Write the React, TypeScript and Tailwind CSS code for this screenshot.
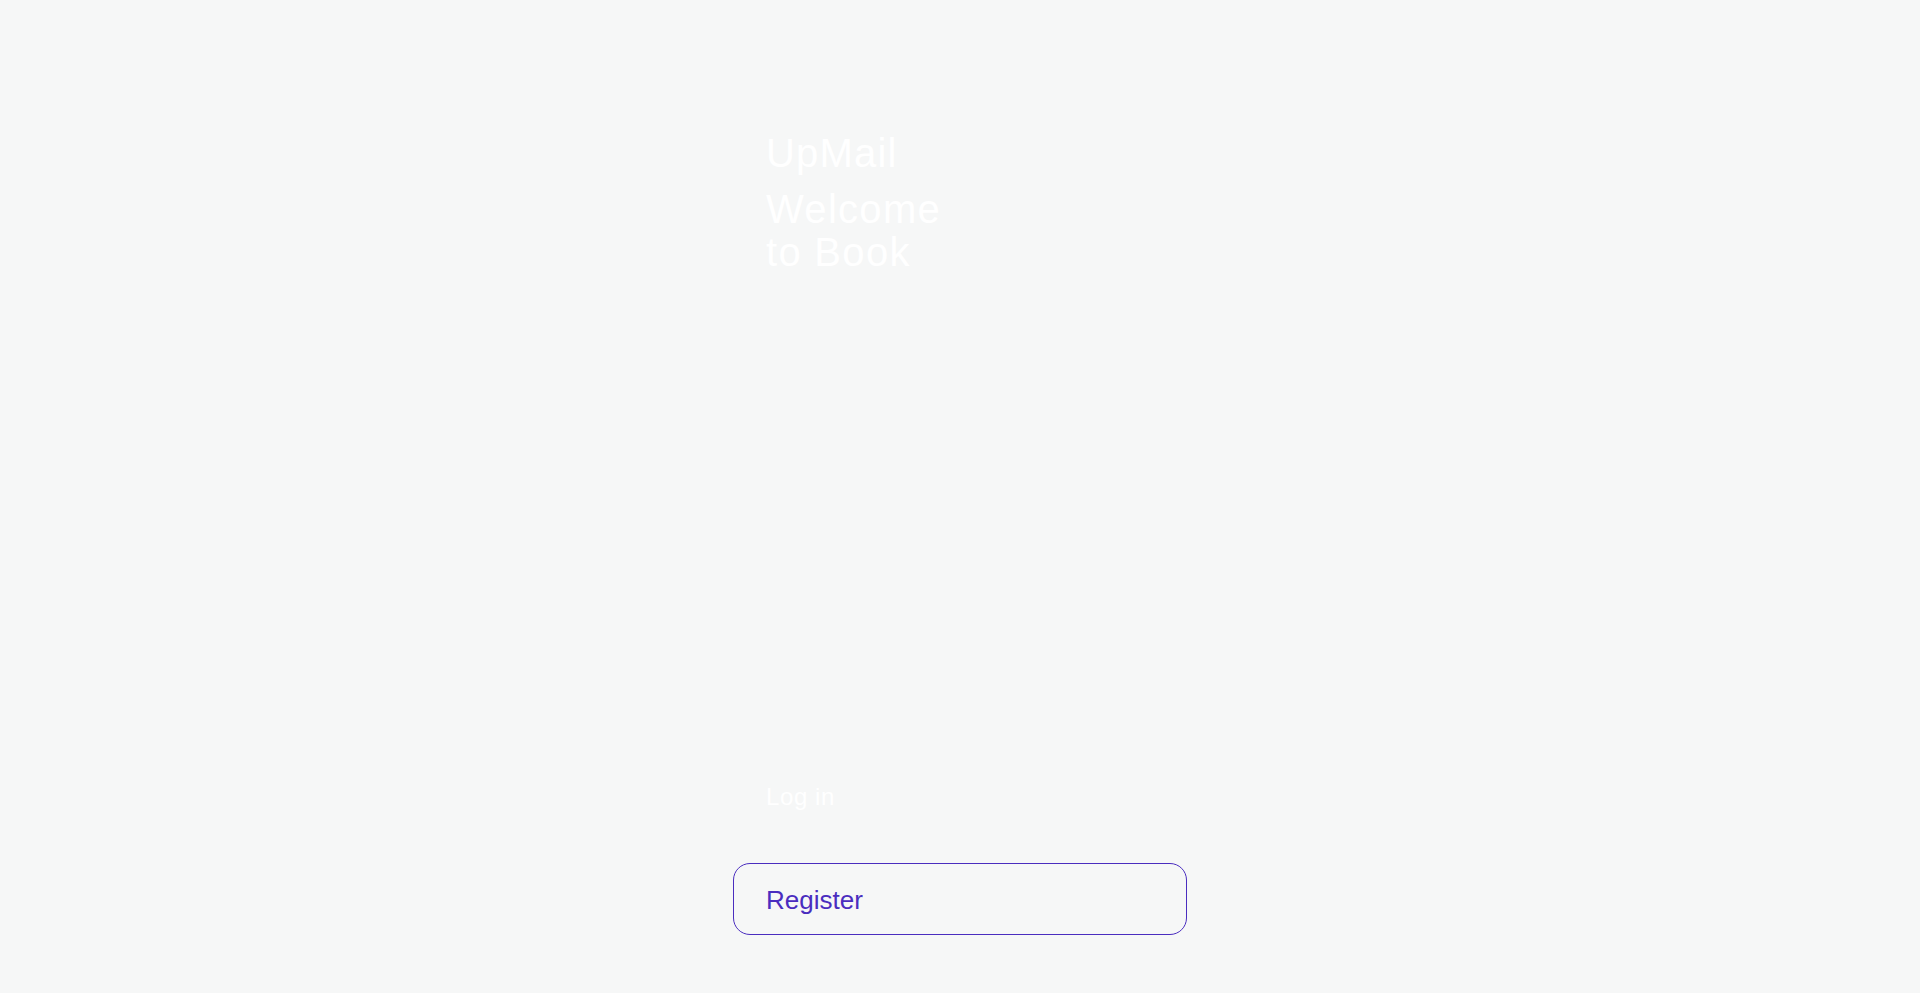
import React from 'react'

const App: React.FC = () => {
  return (
    <div
      className="min-h-screen w-full bg-[#f6f7f7] flex justify-center"
      style={{ fontFamily: '"Liberation Sans", Arial, sans-serif' }}
    >
      <div className="w-[454px] h-screen flex flex-col pt-[130px] pb-[58px]">
        {/* Heading */}
        <div className="px-[33px] text-white">
          <h1 className="text-[40px] leading-[46px] tracking-[1.2px] font-normal">UpMail</h1>
          <h2 className="mt-[12px] w-[200px] text-[40px] leading-[43px] tracking-[1.3px] font-normal">
            Welcome to Book
          </h2>
        </div>

        <div className="flex-1" />

        {/* Actions */}
        <div className="px-[33px]">
          <a href="#" className="block text-[24px] leading-[28px] tracking-[0.6px] text-white">
            Log in
          </a>
        </div>
        <button className="mt-[52px] h-[72px] w-full flex items-center rounded-[17px] border border-[#4a2dbf] bg-transparent px-[32px] pt-[2px] text-left text-[26px] text-[#4a2dbf]">
          Register
        </button>
      </div>
    </div>
  )
}

export default App
